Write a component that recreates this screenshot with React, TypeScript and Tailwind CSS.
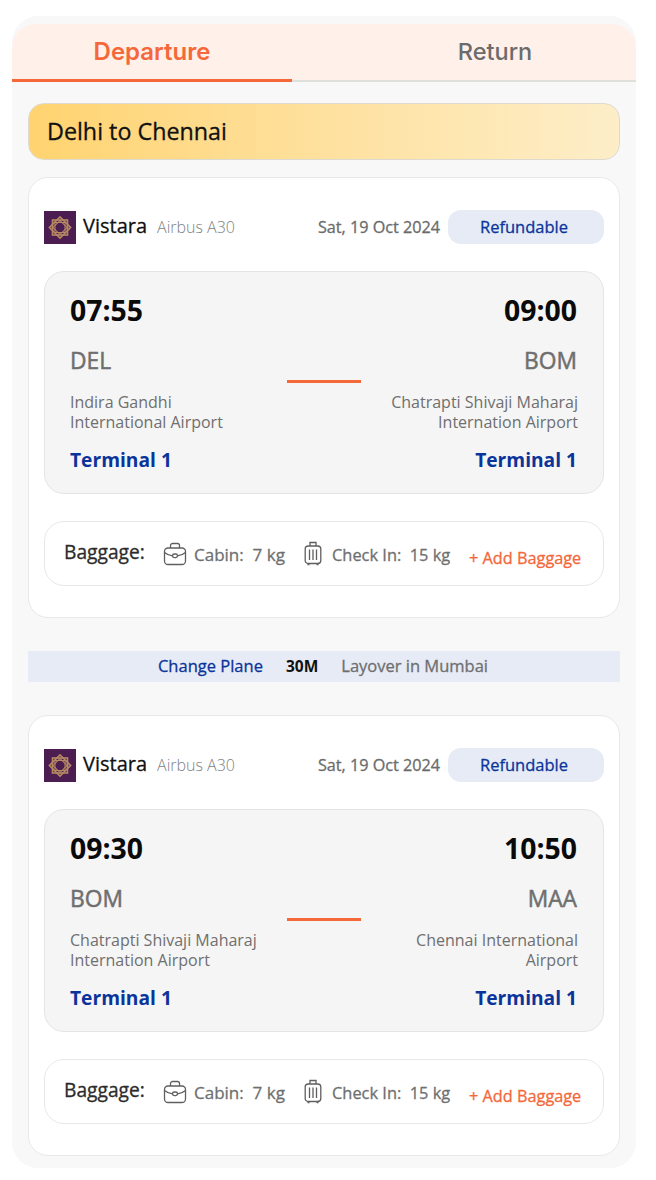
import React from "react";

const Logo = () => (
  <svg width="32" height="33" viewBox="0 0 32 33" className="shrink-0">
    <rect width="32" height="33" fill="#4c1d50" />
    <g fill="none" stroke="#b58a63" strokeWidth="1.6">
      <rect x="8.5" y="9" width="15" height="15" />
      <rect x="8.5" y="9" width="15" height="15" transform="rotate(45 16 16.5)" />
      <rect x="11" y="11.5" width="10" height="10" strokeWidth="1" />
      <rect x="11" y="11.5" width="10" height="10" strokeWidth="1" transform="rotate(45 16 16.5)" />
    </g>
    <circle cx="16" cy="16.5" r="3.8" fill="#4c1d50" />
  </svg>
);

const Briefcase = () => (
  <svg width="24" height="24" viewBox="0 0 24 24" fill="none" stroke="#5f5f5f" strokeWidth="1.3" className="shrink-0">
    <rect x="1.5" y="6" width="21" height="16.5" rx="3.5" />
    <path d="M7.5 6V3.5a2 2 0 0 1 2-2h5a2 2 0 0 1 2 2V6" />
    <path d="M1.5 10.5c3 2.5 6 3.2 8 3.4M22.5 10.5c-3 2.5-6 3.2-8 3.4" />
    <rect x="9.5" y="12" width="5" height="3.6" rx="1.8" />
  </svg>
);

const Suitcase = () => (
  <svg width="18" height="26" viewBox="0 0 18 26" fill="none" stroke="#5f5f5f" strokeWidth="1.3" className="shrink-0">
    <path d="M6 5V1.5h6V5" />
    <rect x="1.2" y="5" width="15.6" height="17.5" rx="3" />
    <path d="M5.5 8.5v10.5M9 8.5v10.5M12.5 8.5v10.5" />
    <path d="M4.5 22.5v1.8M13.5 22.5v1.8" strokeWidth="2" />
  </svg>
);

type Leg = {
  depTime: string; arrTime: string; from: string; to: string;
  fromName: [string, string]; toName: [string, string];
};

const Card = ({ leg }: { leg: Leg }) => (
  <section className="mx-4 h-[441px] rounded-[20px] border border-[#e8e8e8] bg-white px-[15px] pt-[32px]">
    <div className="flex h-[34px] items-center">
      <Logo />
      <span className="ml-[7px] pb-[3px] text-[20px] leading-none text-[#111] [-webkit-text-stroke:0.3px]">Vistara</span>
      <span className="ml-[10px] text-[16px] font-light leading-none text-[#7f7f7f]">Airbus A30</span>
      <span className="ml-auto text-[16.2px] leading-none text-[#6b6b6b] [-webkit-text-stroke:0.3px]">Sat, 19 Oct 2024</span>
      <span className="ml-2 flex h-[34px] w-[156px] items-center justify-center rounded-[13px] bg-[#e6ebf5] pr-1 text-[16.5px] text-[#0b349b] [-webkit-text-stroke:0.3px]">Refundable</span>
    </div>
    <div className="relative mt-[27px] h-[223px] rounded-[20px] border border-[#e4e4e4] bg-[#f5f5f5] pl-[25px] pr-[26px] pt-[19px]">
      <div className="flex justify-between text-[28.4px] font-bold leading-[38px] text-[#0a0a0a]">
        <span>{leg.depTime}</span><span>{leg.arrTime}</span>
      </div>
      <div className="mt-[17px] flex justify-between text-[22.8px] leading-[30px] text-[#6f6f6f] [-webkit-text-stroke:0.5px]">
        <span>{leg.from}</span><span>{leg.to}</span>
      </div>
      <div className="-mr-px mt-[16px] flex justify-between text-[16px] leading-[20px] text-[#6f6f6f]">
        <span>{leg.fromName[0]}<br />{leg.fromName[1]}</span>
        <span className="text-right">{leg.toName[0]}<br />{leg.toName[1]}</span>
      </div>
      <div className="mt-[15px] flex justify-between text-[19.2px] font-bold leading-[26px] text-[#0b349b]">
        <span>Terminal 1</span><span>Terminal 1</span>
      </div>
      <div className="absolute left-[242px] top-[108px] h-[3px] w-[74px] bg-[#f4683a]" />
    </div>
    <div className="mt-[27px] flex h-[65px] items-center rounded-[20px] border border-[#e8e8e8] bg-white pl-[19px]">
      <span className="w-[82px] whitespace-nowrap pb-[3px] text-[19.2px] leading-none text-[#2b2b2b] [-webkit-text-stroke:0.3px]">Baggage:</span>
      <span className="ml-[17px]"><Briefcase /></span>
      <span className="ml-[7px] w-[90px] whitespace-pre pt-[2px] text-[17px] text-[#6f6f6f] [-webkit-text-stroke:0.3px]">Cabin:  7 kg</span>
      <span className="ml-[20px]"><Suitcase /></span>
      <span className="ml-[10px] w-[118px] whitespace-pre pt-[4px] text-[16.4px] text-[#6f6f6f] [-webkit-text-stroke:0.3px]">Check In:  15 kg</span>
      <span className="ml-[19px] whitespace-nowrap pt-[10px] text-[16.3px] text-[#f4683a] [-webkit-text-stroke:0.3px]">+ Add Baggage</span>
    </div>
  </section>
);

export default function App() {
  return (
    <div className="h-[1180px] w-[656px] bg-white pt-4 [font-family:'Open_Sans',sans-serif]">
      <main className="ml-3 h-[1152px] w-[624px] overflow-hidden rounded-[26px] bg-[#f8f8f8] pt-2">
        <div className="flex h-[58px] rounded-t-[24px] border-b-2 border-[#dfdfdc] bg-[#fff0ea] [font-family:Inter,sans-serif]">
          <div className="-mb-[2px] flex w-[280px] items-center justify-center border-b-[3px] border-[#f4683a] text-[24px] font-semibold text-[#f4683a]">Departure</div>
          <div className="flex flex-1 items-center justify-center pl-[62px] text-[23.5px] font-medium text-[#6b6b6b]">Return</div>
        </div>
        <div className="mx-4 mt-[21px] flex h-[57px] items-center rounded-[16px] border border-[#dedad0] bg-gradient-to-r from-[#ffd36f] to-[#fdeec8] px-[18px] text-[23.3px] text-[#111] [-webkit-text-stroke:0.3px]">Delhi to Chennai</div>
        <div className="mt-[17px]">
          <Card leg={{ depTime: "07:55", arrTime: "09:00", from: "DEL", to: "BOM", fromName: ["Indira Gandhi", "International Airport"], toName: ["Chatrapti Shivaji Maharaj", "Internation Airport"] }} />
        </div>
        <div className="mx-4 mt-[33px] flex h-[31px] items-center justify-center gap-[23px] bg-[#e6ebf5] pr-[2px] text-[16.5px]">
          <span className="text-[#0b349b] [-webkit-text-stroke:0.3px]">Change Plane</span>
          <span className="text-[15.5px] font-bold text-[#111]">30M</span>
          <span className="text-[#6f6f6f] [-webkit-text-stroke:0.3px]">Layover in Mumbai</span>
        </div>
        <div className="mt-[33px]">
          <Card leg={{ depTime: "09:30", arrTime: "10:50", from: "BOM", to: "MAA", fromName: ["Chatrapti Shivaji Maharaj", "Internation Airport"], toName: ["Chennai International", "Airport"] }} />
        </div>
      </main>
    </div>
  );
}
